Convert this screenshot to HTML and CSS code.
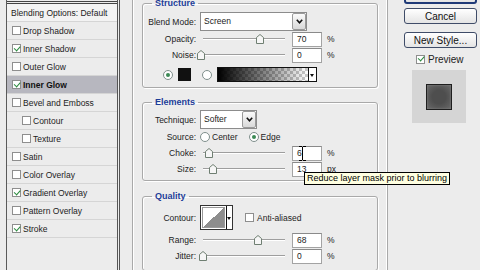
FILE: index.html
```html
<!DOCTYPE html>
<html lang="en">
  <head>
    <meta charset="UTF-8" />
    <title>Layer Style - Inner Glow</title>
    <link rel="stylesheet" href="styles.css">
  </head>
  <body>
    <div class="dialog">
      <div class="styles">
        <div class="styles-title">Styles</div>
        <div class="styles-row head">Blending Options: Default</div>
        <div class="styles-row"><span class="check"></span>Drop Shadow</div>
        <div class="styles-row"><span class="check on"></span>Inner Shadow</div>
        <div class="styles-row"><span class="check"></span>Outer Glow</div>
        <div class="styles-row active"><span class="check on"></span>Inner Glow</div>
        <div class="styles-row"><span class="check"></span>Bevel and Emboss</div>
        <div class="styles-row sub"><span class="check"></span>Contour</div>
        <div class="styles-row sub"><span class="check"></span>Texture</div>
        <div class="styles-row"><span class="check"></span>Satin</div>
        <div class="styles-row"><span class="check"></span>Color Overlay</div>
        <div class="styles-row"><span class="check on"></span>Gradient Overlay</div>
        <div class="styles-row"><span class="check"></span>Pattern Overlay</div>
        <div class="styles-row"><span class="check on"></span>Stroke</div>
      </div>

      <div class="options">
        <fieldset class="group structure">
          <legend>Structure</legend>
          <div class="row tall">
            <span class="label">Blend Mode:</span>
            <div class="select blend">
              <span class="value">Screen</span>
              <span class="arrow"><svg width="7" height="5" viewBox="0 0 7 5"><polyline points="0.8,0.8 3.5,3.8 6.2,0.8" fill="none" stroke="#111" stroke-width="1.6"/></svg></span>
            </div>
          </div>
          <div class="row">
            <span class="label">Opacity:</span>
            <div class="slider">
              <svg class="thumb" style="left:70%" width="8" height="10" viewBox="0 0 8 10"><path d="M0.5 3.5 L4 0.5 L7.5 3.5 V9.5 H0.5 Z" fill="#f6f6f6" stroke="#6f7f72"/></svg>
            </div>
            <span class="field">70</span><span class="unit">%</span>
          </div>
          <div class="row">
            <span class="label">Noise:</span>
            <div class="slider">
              <svg class="thumb" style="left:0%" width="8" height="10" viewBox="0 0 8 10"><path d="M0.5 3.5 L4 0.5 L7.5 3.5 V9.5 H0.5 Z" fill="#f6f6f6" stroke="#6f7f72"/></svg>
            </div>
            <span class="field">0</span><span class="unit">%</span>
          </div>
          <div class="row colors">
            <span class="radio on"></span>
            <span class="swatch"></span>
            <span class="radio"></span>
            <div class="gradient">
              <span class="ramp"></span>
              <span class="mini-arrow"></span>
            </div>
          </div>
        </fieldset>

        <fieldset class="group elements">
          <legend>Elements</legend>
          <div class="row tall">
            <span class="label">Technique:</span>
            <div class="select technique">
              <span class="value">Softer</span>
              <span class="arrow"><svg width="7" height="5" viewBox="0 0 7 5"><polyline points="0.8,0.8 3.5,3.8 6.2,0.8" fill="none" stroke="#111" stroke-width="1.6"/></svg></span>
            </div>
          </div>
          <div class="row source">
            <span class="label">Source:</span>
            <span class="radio"></span><span class="option">Center</span>
            <span class="radio on"></span><span class="option">Edge</span>
          </div>
          <div class="row">
            <span class="label">Choke:</span>
            <div class="slider">
              <svg class="thumb" style="left:9%" width="8" height="10" viewBox="0 0 8 10"><path d="M0.5 3.5 L4 0.5 L7.5 3.5 V9.5 H0.5 Z" fill="#f6f6f6" stroke="#6f7f72"/></svg>
            </div>
            <span class="field">6</span><span class="unit">%</span>
          </div>
          <div class="row">
            <span class="label">Size:</span>
            <div class="slider">
              <svg class="thumb" style="left:14%" width="8" height="10" viewBox="0 0 8 10"><path d="M0.5 3.5 L4 0.5 L7.5 3.5 V9.5 H0.5 Z" fill="#f6f6f6" stroke="#6f7f72"/></svg>
            </div>
            <span class="field">13</span><span class="unit">px</span>
          </div>
        </fieldset>

        <fieldset class="group quality">
          <legend>Quality</legend>
          <div class="row contour">
            <span class="label">Contour:</span>
            <div class="contour-pick">
              <span class="curve"></span>
              <span class="mini-arrow"></span>
            </div>
            <span class="check"></span><span class="option">Anti-aliased</span>
          </div>
          <div class="row">
            <span class="label">Range:</span>
            <div class="slider">
              <svg class="thumb" style="left:68%" width="8" height="10" viewBox="0 0 8 10"><path d="M0.5 3.5 L4 0.5 L7.5 3.5 V9.5 H0.5 Z" fill="#f6f6f6" stroke="#6f7f72"/></svg>
            </div>
            <span class="field">68</span><span class="unit">%</span>
          </div>
          <div class="row">
            <span class="label">Jitter:</span>
            <div class="slider">
              <svg class="thumb" style="left:2%" width="8" height="10" viewBox="0 0 8 10"><path d="M0.5 3.5 L4 0.5 L7.5 3.5 V9.5 H0.5 Z" fill="#f6f6f6" stroke="#6f7f72"/></svg>
            </div>
            <span class="field">0</span><span class="unit">%</span>
          </div>
        </fieldset>
      </div>

      <div class="actions">
        <button class="btn default">OK</button>
        <button class="btn">Cancel</button>
        <button class="btn">New Style...</button>
        <div class="preview-check"><span class="check on"></span>Preview</div>
        <div class="preview"><div class="preview-swatch"></div></div>
      </div>

      <svg class="ibeam" width="7" height="15" viewBox="0 0 7 15">
        <path d="M0 0.5 H3 M4 0.5 H7 M3.5 1 V14 M0 14.5 H3 M4 14.5 H7" stroke="#000" fill="none"/>
      </svg>
      <div class="tooltip">Reduce layer mask prior to blurring</div>
    </div>
  </body>
</html>
```

FILE: styles.css
```css
:root {
  --face: #ececec;
  --etch: #a9a9a9;
  --title-blue: #1d3d98;
  --check-green: #2b8a3e;
}

* {
  box-sizing: border-box;
}

body {
  margin: 0;
  background: var(--face);
  font-family: "Liberation Sans", Arial, sans-serif;
  font-size: 8.5px;
  color: #222;
}

.dialog {
  position: relative;
  display: flex;
  height: 270px;
  overflow: hidden;
}

/* left list of effects */
.styles {
  margin-left: 6px;
  width: 114px;
  border-left: 1px solid #5a5a5a;
  border-right: 3px double #555;
}

.styles-title {
  height: 14px;
  margin-top: -10px;
  padding-left: 4px;
  border-bottom: 3px double #444;
}

.styles-row {
  display: flex;
  align-items: center;
  gap: 2px;
  height: 18px;
  padding-left: 5px;
  border-bottom: 1px solid #d5d5d5;
}

.styles-row.head {
  padding-left: 4px;
  background: #f3f3f3;
}

.styles-row.sub {
  padding-left: 15px;
}

.styles-row.active {
  background: #b7b7bf;
  font-weight: bold;
  color: #111;
}

.check {
  position: relative;
  flex: none;
  width: 9px;
  height: 9px;
  border: 1px solid #8e8e8e;
  background: #fff;
}

.check.on::after {
  content: "";
  position: absolute;
  left: 1px;
  top: 0.5px;
  width: 5px;
  height: 2.5px;
  border-left: 1.5px solid var(--check-green);
  border-bottom: 1.5px solid var(--check-green);
  transform: rotate(-48deg);
}

/* middle options panel */
.options {
  margin-left: 12px;
  width: 256px;
  padding: 0 9px;
  border-left: 1px solid var(--etch);
  border-right: 1px solid var(--etch);
  box-shadow: inset 1px 0 #fff, inset -1px 0 #fff;
}

.group {
  margin: 0;
  padding: 0 5px;
  border: 1px solid var(--etch);
  border-radius: 3px;
  box-shadow: inset 1px 1px #fff, 1px 1px #fff;
  min-width: 0;
}

.group legend {
  margin-left: 4px;
  padding: 0 3px;
  font-size: 9px;
  line-height: 10px;
  font-weight: bold;
  color: var(--title-blue);
}

.structure {
  margin-top: -2px;
  padding-top: 4px;
  padding-bottom: 1px;
}

.elements {
  margin-top: 9px;
  padding-top: 3px;
  padding-bottom: 3px;
}

.quality {
  margin-top: 10px;
  padding-top: 2px;
  padding-bottom: 6px;
}

.row {
  display: flex;
  align-items: center;
  height: 16px;
}

.row.tall {
  height: 19px;
}

.label {
  flex: none;
  width: 48px;
  margin-right: 4px;
  text-align: right;
}

.select {
  display: flex;
  height: 19px;
  border: 1px solid #8c8c8c;
  background: #fff;
}

.select.blend {
  width: 107px;
}

.select.technique {
  width: 57px;
}

.select .value {
  flex: 1;
  padding-left: 3px;
  line-height: 17px;
}

.select .arrow {
  display: flex;
  align-items: center;
  justify-content: center;
  width: 14px;
  border: 1px solid #9a9a9a;
  border-radius: 2px;
  background: linear-gradient(#fbfbfb, #d9d9d9);
}

.slider {
  position: relative;
  flex: none;
  width: 84px;
  height: 16px;
  margin: 0 7px 0 1px;
}

.slider::before {
  content: "";
  position: absolute;
  left: 2px;
  right: 0;
  top: 7px;
  height: 1px;
  background: #9e9e9e;
  box-shadow: 0 1px #fff;
}

.thumb {
  position: absolute;
  top: 3px;
  margin-left: -4px;
}

.field {
  flex: none;
  width: 30px;
  height: 15px;
  padding-left: 4px;
  line-height: 13px;
  border: 1px solid #a3a3a3;
  border-top-color: #8a8a8a;
  background: #fff;
}

.unit {
  margin-left: 5px;
}

.radio {
  position: relative;
  flex: none;
  width: 10px;
  height: 10px;
  border-radius: 50%;
  border: 1px solid #7f8f8c;
  background: #fff;
}

.radio.on::after {
  content: "";
  position: absolute;
  inset: 2px;
  border-radius: 50%;
  background: #3c8a55;
}

.row.colors {
  height: 23px;
  padding-left: 15px;
}

.swatch {
  width: 13px;
  height: 13px;
  margin: 0 11px 0 5px;
  background: #111;
}

.gradient {
  display: flex;
  width: 100px;
  height: 15px;
  margin-left: 5px;
  border: 1px solid #111;
}

.gradient .ramp {
  flex: 1;
  background:
    linear-gradient(to right, #000, rgba(0, 0, 0, 0)),
    repeating-conic-gradient(#c9c9c9 0 25%, #fff 0 50%) 0 0 / 6px 6px;
}

.mini-arrow {
  position: relative;
  width: 8px;
  border-left: 1px solid #111;
  background: #fff;
}

.mini-arrow::after {
  content: "";
  position: absolute;
  left: 1px;
  top: 50%;
  margin-top: -1px;
  border: 2.5px solid transparent;
  border-top: 3px solid #111;
}

.row.source .option {
  margin: 0 11px 0 2px;
}

.row.contour {
  height: 29px;
}

.contour-pick {
  display: flex;
  width: 33px;
  height: 25px;
  border: 1px solid #333;
  margin-right: 12px;
  background: #fff;
}

.contour-pick .curve {
  flex: 1;
  margin: 1px;
  border: 1px solid #999;
  background: linear-gradient(to bottom right, #fff 50%, #8d8d8d 50%);
}

.contour-pick .mini-arrow {
  width: 6px;
}

.contour-pick .mini-arrow::after {
  left: 0;
  border-width: 2px;
  border-top-width: 3px;
}

.row.contour .option {
  margin-left: 3px;
}

/* right column */
.actions {
  display: flex;
  flex-direction: column;
  align-items: flex-start;
  padding-left: 16px;
}

.btn {
  width: 73px;
  height: 16px;
  margin: 0;
  padding: 0;
  border: 1px solid #3f4c68;
  border-radius: 3px;
  background: linear-gradient(#fff, #e4e4e4);
  font-family: "Liberation Sans", Arial, sans-serif;
  font-size: 10px;
  color: #111;
}

.btn.default {
  margin-top: -12px;
  border: 2px solid #1f3a78;
}

.btn + .btn {
  margin-top: 4px;
}

.btn + .btn + .btn {
  margin-top: 8px;
}

.preview-check {
  display: flex;
  align-items: center;
  gap: 3px;
  height: 14px;
  margin: 4px 0 0 12px;
  font-size: 10px;
}

.preview {
  display: flex;
  align-items: center;
  justify-content: center;
  width: 54px;
  height: 53px;
  margin: 4px 0 0 8px;
  background: #d5d5d5;
}

.preview-swatch {
  width: 26px;
  height: 26px;
  border: 1px solid #1e1e1e;
  background: radial-gradient(#4e4e4e 40%, #6a6a6a 100%);
  box-shadow: inset 0 0 2px #888;
}

/* overlays: mouse cursor and tooltip */
.ibeam {
  position: absolute;
  left: 299px;
  top: 146px;
}

.tooltip {
  position: absolute;
  left: 304px;
  top: 172px;
  height: 13px;
  padding: 0 2px;
  border: 1px solid #000;
  background: #ffffe1;
  font-size: 9px;
  line-height: 11px;
  white-space: nowrap;
  color: #000;
}
```
